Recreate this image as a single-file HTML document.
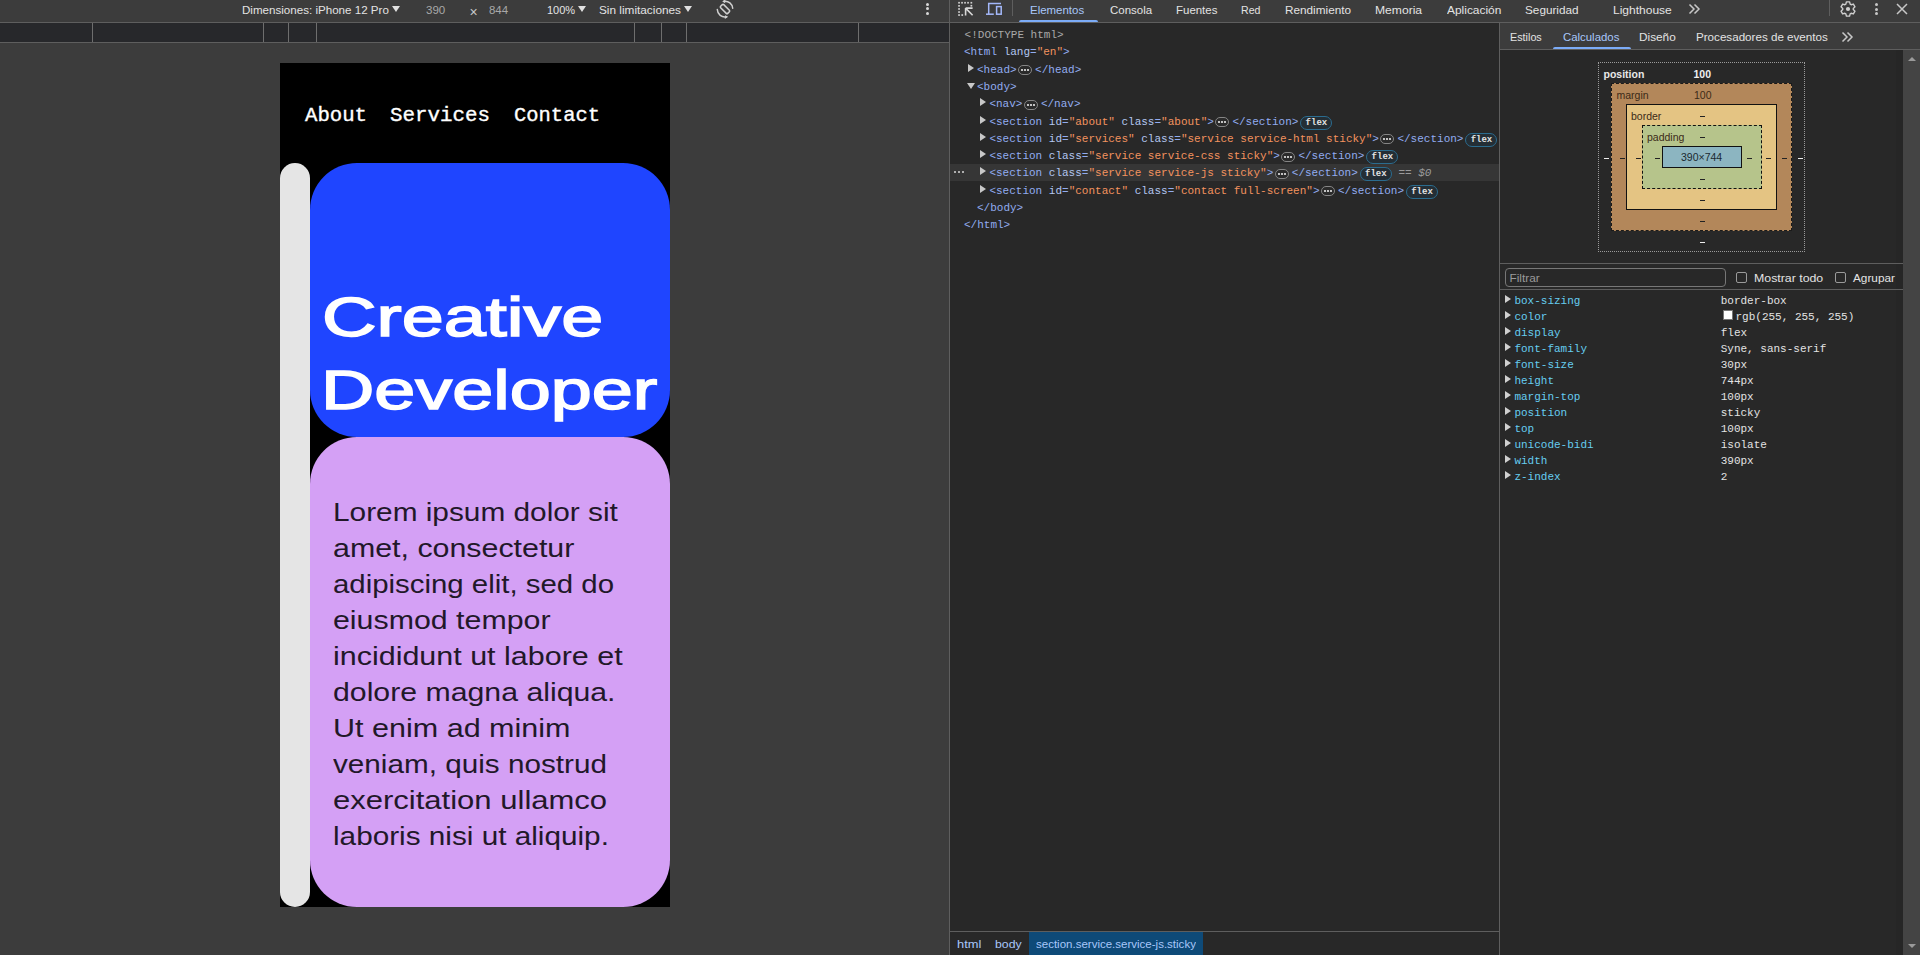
<!DOCTYPE html>
<html lang="en">
<head>
<meta charset="utf-8">
<style>
*{box-sizing:border-box;margin:0;padding:0}
html,body{width:1920px;height:955px;overflow:hidden;background:#3c3c3c;font-family:"Liberation Sans",sans-serif}
.a{position:absolute;white-space:nowrap}
#screen{position:absolute;left:280px;top:63px;width:390px;height:844px;background:#000;overflow:hidden}

.ui{font-family:"Liberation Sans",sans-serif;font-size:11.8px;line-height:16px;color:#e3e3e3}
.mono{font-family:"Liberation Mono",monospace;font-size:11px;line-height:16px;color:#e3e3e3}
.tg{color:#92acf0}.an{color:#b3c6f0}.av{color:#f3935f}.dt{color:#a8a8a8}
.ell{display:inline-block;vertical-align:-2.5px;margin:0 3px 0 1.5px}
.flex{display:inline-block;vertical-align:0;margin-left:2px;width:32px;height:14px;line-height:12px;text-align:center;font-family:'Liberation Mono',monospace;font-weight:bold;font-size:9px;color:#e2e2e2;border:1px solid #2b6c8f;border-radius:7px;background:#242e35}
.dl{color:#9a9a9a}

.nav{top:41px;-webkit-text-stroke:0.35px #fff;font-family:"Liberation Mono",monospace;font-size:20px;color:#fff;line-height:24px;transform-origin:0 0}
.hero{font-weight:normal;-webkit-text-stroke:1.5px #fff;font-size:55px;line-height:73px;color:#fff;transform-origin:0 0}
.lorem{font-size:26px;line-height:36px;color:#221829;transform-origin:0 0}

</style>
</head>
<body>
<div style="position:absolute;left:0px;top:0px;width:949px;height:22px;background:#3c3c3c"></div>
<div class="a ui" style="left:241.80px;top:1.5px;transform-origin:0 0;transform:scaleX(0.9821);">Dimensiones: iPhone 12 Pro</div>
<div style="position:absolute;left:392px;top:5.5px;width:0;height:0;border-left:4.0px solid transparent;border-right:4.0px solid transparent;border-top:6px solid #e0e0e0"></div>
<div class="a ui" style="left:426.01px;top:1.5px;transform-origin:0 0;transform:scaleX(0.9791);color:#a8a8a8">390</div>
<div class="a ui" style="left:469.5px;top:3.5px;color:#c8c8c8;font-size:14px">×</div>
<div class="a ui" style="left:488.80px;top:1.5px;transform-origin:0 0;transform:scaleX(0.9714);color:#a8a8a8">844</div>
<div class="a ui" style="left:547.00px;top:1.5px;transform-origin:0 0;transform:scaleX(0.9334);">100%</div>
<div style="position:absolute;left:578px;top:5.5px;width:0;height:0;border-left:4.0px solid transparent;border-right:4.0px solid transparent;border-top:6px solid #e0e0e0"></div>
<div class="a ui" style="left:599.00px;top:1.5px;transform-origin:0 0;transform:scaleX(1.0000);">Sin limitaciones</div>
<div style="position:absolute;left:684px;top:5.5px;width:0;height:0;border-left:4.0px solid transparent;border-right:4.0px solid transparent;border-top:6px solid #e0e0e0"></div>
<svg style="position:absolute;left:714px;top:0px" width="22" height="20" viewBox="0 0 22 20"><g fill="none" stroke="#d0d0d0" stroke-width="1.5" stroke-linecap="round"><rect x="8.8" y="4" width="4.4" height="10" rx="1" transform="rotate(-45 11 9)"/><path d="M10 1.3 A7.6 7.6 0 0 1 18.7 8.3"/><path d="M3.3 9.6 A7.6 7.6 0 0 0 12.4 16.8"/></g><path d="M8.2 1.4 L11.4 -0.6 L11.2 3.2Z M14.2 16.8 L10.8 19 L11 15.2Z" fill="#d0d0d0"/></svg>
<div style="position:absolute;left:926.4px;top:2.9px;width:3px;height:3px;background:#d8d8d8;border-radius:50%"></div>
<div style="position:absolute;left:926.4px;top:7.4px;width:3px;height:3px;background:#d8d8d8;border-radius:50%"></div>
<div style="position:absolute;left:926.4px;top:11.9px;width:3px;height:3px;background:#d8d8d8;border-radius:50%"></div>
<div style="position:absolute;left:0px;top:22px;width:949px;height:1px;background:#5e5e5e"></div>
<div style="position:absolute;left:0px;top:23px;width:949px;height:19px;background:#27282b"></div>
<div style="position:absolute;left:0px;top:42px;width:949px;height:1px;background:#5e5e5e"></div>
<div style="position:absolute;left:92px;top:23px;width:1px;height:19px;background:#6e6e6e"></div>
<div style="position:absolute;left:263px;top:23px;width:1px;height:19px;background:#6e6e6e"></div>
<div style="position:absolute;left:288px;top:23px;width:1px;height:19px;background:#6e6e6e"></div>
<div style="position:absolute;left:316px;top:23px;width:1px;height:19px;background:#6e6e6e"></div>
<div style="position:absolute;left:634px;top:23px;width:1px;height:19px;background:#6e6e6e"></div>
<div style="position:absolute;left:661px;top:23px;width:1px;height:19px;background:#6e6e6e"></div>
<div style="position:absolute;left:686px;top:23px;width:1px;height:19px;background:#6e6e6e"></div>
<div style="position:absolute;left:858px;top:23px;width:1px;height:19px;background:#6e6e6e"></div>
<div style="position:absolute;left:0px;top:43px;width:949px;height:912px;background:#3c3c3c"></div>
<div id="screen">
<div class="a nav" style="left:24.73648539614402px;transform:scaleX(1.033059578508698)">About</div>
<div class="a nav" style="left:110.09550080099473px;transform:scaleX(1.04166994259613)">Services</div>
<div class="a nav" style="left:233.72443368727227px;transform:scaleX(1.0235770638431585)">Contact</div>
<div style="position:absolute;left:0;top:100px;width:30px;height:744px;background:#e5e5e5;border-radius:15px"></div>
<div style="position:absolute;left:30px;top:100px;width:360px;height:274px;background:#1f45ff;border-radius:47px;overflow:hidden">
<div class="a hero" style="left:11.781781223807855px;top:118px;transform:scaleX(1.3740245309178205)">Creative</div>
<div class="a hero" style="left:10.632424752281565px;top:191px;transform:scaleX(1.3418938119295865)">Developer</div>
</div>
<div style="position:absolute;left:30px;top:374px;width:360px;height:470px;background:#d4a0f5;border-radius:47px">
<div class="a lorem" style="left:23px;top:57px;transform:scaleX(1.1460153284807353)">Lorem ipsum dolor sit</div>
<div class="a lorem" style="left:23px;top:93px;transform:scaleX(1.1680010662269504)">amet, consectetur</div>
<div class="a lorem" style="left:23px;top:129px;transform:scaleX(1.130400381303449)">adipiscing elit, sed do</div>
<div class="a lorem" style="left:23px;top:165px;transform:scaleX(1.1666666666666667)">eiusmod tempor</div>
<div class="a lorem" style="left:23px;top:201px;transform:scaleX(1.1717160493404404)">incididunt ut labore et</div>
<div class="a lorem" style="left:23px;top:237px;transform:scaleX(1.1633703924247996)">dolore magna aliqua.</div>
<div class="a lorem" style="left:23px;top:273px;transform:scaleX(1.1740359149623456)">Ut enim ad minim</div>
<div class="a lorem" style="left:23px;top:309px;transform:scaleX(1.1420428648979697)">veniam, quis nostrud</div>
<div class="a lorem" style="left:23px;top:345px;transform:scaleX(1.1929824561403508)">exercitation ullamco</div>
<div class="a lorem" style="left:23px;top:381px;transform:scaleX(1.1431322776539297)">laboris nisi ut aliquip.</div>
</div></div>
<div style="position:absolute;left:949px;top:0px;width:1px;height:955px;background:#5e5e5e"></div>
<div style="position:absolute;left:950px;top:0px;width:970px;height:22px;background:#3c3c3c"></div>
<div style="position:absolute;left:950px;top:22px;width:970px;height:1px;background:#5e5e5e"></div>
<svg style="position:absolute;left:957px;top:0px" width="20" height="20" viewBox="0 0 20 20"><rect x="1.2" y="1.9000000000000001" width="1.7" height="1.7" fill="#d0d0d0"/><rect x="4.2" y="1.9000000000000001" width="1.7" height="1.7" fill="#d0d0d0"/><rect x="7.2" y="1.9000000000000001" width="1.7" height="1.7" fill="#d0d0d0"/><rect x="10.2" y="1.9000000000000001" width="1.7" height="1.7" fill="#d0d0d0"/><rect x="13.5" y="1.9000000000000001" width="1.7" height="1.7" fill="#d0d0d0"/><rect x="13.5" y="4.9" width="1.7" height="1.7" fill="#d0d0d0"/><rect x="1.2" y="5.0" width="1.7" height="1.7" fill="#d0d0d0"/><rect x="1.2" y="8.1" width="1.7" height="1.7" fill="#d0d0d0"/><rect x="1.2" y="11.2" width="1.7" height="1.7" fill="#d0d0d0"/><rect x="1.2" y="14.2" width="1.7" height="1.7" fill="#d0d0d0"/><rect x="4.4" y="14.2" width="1.7" height="1.7" fill="#d0d0d0"/><path d="M8.6 8.1H15.6M8.6 8.1V15.4M8.6 8.1L15.6 15.2" fill="none" stroke="#d8d8d8" stroke-width="1.6"/></svg>
<svg style="position:absolute;left:984px;top:0px" width="20" height="20" viewBox="0 0 20 20"><g fill="none" stroke="#a4b8fa" stroke-width="1.5"><path d="M4.7 14.2V3.5H17"/><path d="M2 14.2H9.8"/><rect x="12.6" y="6.6" width="4.6" height="7.6"/></g></svg>
<div style="position:absolute;left:1012px;top:0px;width:1px;height:16px;background:#5e5e5e"></div>
<div class="a ui" style="left:1030.41px;top:1.5px;transform-origin:0 0;transform:scaleX(0.9711);color:#a8c7fa">Elementos</div>
<div class="a ui" style="left:1109.80px;top:1.5px;transform-origin:0 0;transform:scaleX(0.9723);color:#e3e3e3">Consola</div>
<div class="a ui" style="left:1175.80px;top:1.5px;transform-origin:0 0;transform:scaleX(0.9716);color:#e3e3e3">Fuentes</div>
<div class="a ui" style="left:1240.82px;top:1.5px;transform-origin:0 0;transform:scaleX(0.8961);color:#e3e3e3">Red</div>
<div class="a ui" style="left:1284.79px;top:1.5px;transform-origin:0 0;transform:scaleX(0.9971);color:#e3e3e3">Rendimiento</div>
<div class="a ui" style="left:1375.17px;top:1.5px;transform-origin:0 0;transform:scaleX(1.0262);color:#e3e3e3">Memoria</div>
<div class="a ui" style="left:1447.09px;top:1.5px;transform-origin:0 0;transform:scaleX(1.0111);color:#e3e3e3">Aplicación</div>
<div class="a ui" style="left:1524.79px;top:1.5px;transform-origin:0 0;transform:scaleX(0.9964);color:#e3e3e3">Seguridad</div>
<div class="a ui" style="left:1613.49px;top:1.5px;transform-origin:0 0;transform:scaleX(1.0176);color:#e3e3e3">Lighthouse</div>
<div style="position:absolute;left:1019px;top:20px;width:79px;height:2px;background:#7cacf8;border-radius:2px 2px 0 0"></div>
<svg style="position:absolute;left:1687.5px;top:3px" width="13" height="12" viewBox="0 0 13 12"><path d="M1.5 1.5L6 6L1.5 10.5M6.5 1.5L11 6L6.5 10.5" fill="none" stroke="#c7c7c7" stroke-width="1.5"/></svg>
<div style="position:absolute;left:1829px;top:0px;width:1px;height:16px;background:#5e5e5e"></div>
<svg style="position:absolute;left:1840px;top:1px" width="16" height="16" viewBox="0 0 16 16"><path d="M6.41 0.88 L9.59 0.88 L10.16 3.16 L11.11 3.71 L13.37 3.06 L14.97 5.82 L13.27 7.45 L13.27 8.55 L14.97 10.18 L13.37 12.94 L11.11 12.29 L10.16 12.84 L9.59 15.12 L6.41 15.12 L5.84 12.84 L4.89 12.29 L2.63 12.94 L1.03 10.18 L2.73 8.55 L2.73 7.45 L1.03 5.82 L2.63 3.06 L4.89 3.71 L5.84 3.16Z" fill="none" stroke="#cfcfcf" stroke-width="1.4" stroke-linejoin="round"/><circle cx="8" cy="8" r="2.1" fill="#cfcfcf"/></svg>
<div style="position:absolute;left:1874.5px;top:3.0px;width:3px;height:3px;background:#c7c7c7;border-radius:50%"></div>
<div style="position:absolute;left:1874.5px;top:7.5px;width:3px;height:3px;background:#c7c7c7;border-radius:50%"></div>
<div style="position:absolute;left:1874.5px;top:12.0px;width:3px;height:3px;background:#c7c7c7;border-radius:50%"></div>
<svg style="position:absolute;left:1895px;top:2px" width="14" height="14" viewBox="0 0 14 14"><path d="M2 2L12 12M12 2L2 12" stroke="#c7c7c7" stroke-width="1.5"/></svg>
<div style="position:absolute;left:950px;top:23px;width:549px;height:908px;background:#282828"></div>
<div style="position:absolute;left:950px;top:164px;width:549px;height:17px;background:#363636"></div>
<div style="position:absolute;left:953.5px;top:171px;width:2.4px;height:2.4px;background:#d8d8d8;border-radius:50%"></div>
<div style="position:absolute;left:957.5px;top:171px;width:2.4px;height:2.4px;background:#d8d8d8;border-radius:50%"></div>
<div style="position:absolute;left:961.5px;top:171px;width:2.4px;height:2.4px;background:#d8d8d8;border-radius:50%"></div>
<div class="a mono" style="left:964.6px;top:27.200000000000003px;"><span class="dt">&lt;!DOCTYPE html&gt;</span></div>
<div class="a mono" style="left:964px;top:44.47px;"><span class="tg">&lt;html</span> <span class="an">lang</span><span class="tg">=</span><span class="av">"en"</span><span class="tg">&gt;</span></div>
<div style="position:absolute;left:968px;top:63.74000000000001px;width:0;height:0;border-top:4px solid transparent;border-bottom:4px solid transparent;border-left:6px solid #c8c8c8"></div>
<div class="a mono" style="left:977px;top:61.74000000000001px;"><span class="tg">&lt;head&gt;</span><svg class="ell" width="14" height="10" viewBox="0 0 14 10"><rect x="0.5" y="0.5" width="13" height="9" rx="4.5" fill="#2a2a2a" stroke="#858585"/><circle cx="4" cy="5" r="1.1" fill="#e8e8e8"/><circle cx="7" cy="5" r="1.1" fill="#e8e8e8"/><circle cx="10" cy="5" r="1.1" fill="#e8e8e8"/></svg><span class="tg">&lt;/head&gt;</span></div>
<div style="position:absolute;left:967px;top:83.01px;width:0;height:0;border-left:4px solid transparent;border-right:4px solid transparent;border-top:6px solid #c8c8c8"></div>
<div class="a mono" style="left:977px;top:79.01px;"><span class="tg">&lt;body&gt;</span></div>
<div style="position:absolute;left:980.4px;top:98.28px;width:0;height:0;border-top:4px solid transparent;border-bottom:4px solid transparent;border-left:6px solid #c8c8c8"></div>
<div class="a mono" style="left:989.4px;top:96.28px;"><span class="tg">&lt;nav&gt;</span><svg class="ell" width="14" height="10" viewBox="0 0 14 10"><rect x="0.5" y="0.5" width="13" height="9" rx="4.5" fill="#2a2a2a" stroke="#858585"/><circle cx="4" cy="5" r="1.1" fill="#e8e8e8"/><circle cx="7" cy="5" r="1.1" fill="#e8e8e8"/><circle cx="10" cy="5" r="1.1" fill="#e8e8e8"/></svg><span class="tg">&lt;/nav&gt;</span></div>
<div style="position:absolute;left:980.4px;top:115.55px;width:0;height:0;border-top:4px solid transparent;border-bottom:4px solid transparent;border-left:6px solid #c8c8c8"></div>
<div class="a mono" style="left:989.4px;top:113.55px;"><span class="tg">&lt;section</span> <span class="an">id</span><span class="tg">=</span><span class="av">"about"</span> <span class="an">class</span><span class="tg">=</span><span class="av">"about"</span><span class="tg">&gt;</span><svg class="ell" width="14" height="10" viewBox="0 0 14 10"><rect x="0.5" y="0.5" width="13" height="9" rx="4.5" fill="#2a2a2a" stroke="#858585"/><circle cx="4" cy="5" r="1.1" fill="#e8e8e8"/><circle cx="7" cy="5" r="1.1" fill="#e8e8e8"/><circle cx="10" cy="5" r="1.1" fill="#e8e8e8"/></svg><span class="tg">&lt;/section&gt;</span><span class="flex">flex</span></div>
<div style="position:absolute;left:980.4px;top:132.82px;width:0;height:0;border-top:4px solid transparent;border-bottom:4px solid transparent;border-left:6px solid #c8c8c8"></div>
<div class="a mono" style="left:989.4px;top:130.82px;"><span class="tg">&lt;section</span> <span class="an">id</span><span class="tg">=</span><span class="av">"services"</span> <span class="an">class</span><span class="tg">=</span><span class="av">"service service-html sticky"</span><span class="tg">&gt;</span><svg class="ell" width="14" height="10" viewBox="0 0 14 10"><rect x="0.5" y="0.5" width="13" height="9" rx="4.5" fill="#2a2a2a" stroke="#858585"/><circle cx="4" cy="5" r="1.1" fill="#e8e8e8"/><circle cx="7" cy="5" r="1.1" fill="#e8e8e8"/><circle cx="10" cy="5" r="1.1" fill="#e8e8e8"/></svg><span class="tg">&lt;/section&gt;</span><span class="flex">flex</span></div>
<div style="position:absolute;left:980.4px;top:150.09px;width:0;height:0;border-top:4px solid transparent;border-bottom:4px solid transparent;border-left:6px solid #c8c8c8"></div>
<div class="a mono" style="left:989.4px;top:148.09px;"><span class="tg">&lt;section</span> <span class="an">class</span><span class="tg">=</span><span class="av">"service service-css sticky"</span><span class="tg">&gt;</span><svg class="ell" width="14" height="10" viewBox="0 0 14 10"><rect x="0.5" y="0.5" width="13" height="9" rx="4.5" fill="#2a2a2a" stroke="#858585"/><circle cx="4" cy="5" r="1.1" fill="#e8e8e8"/><circle cx="7" cy="5" r="1.1" fill="#e8e8e8"/><circle cx="10" cy="5" r="1.1" fill="#e8e8e8"/></svg><span class="tg">&lt;/section&gt;</span><span class="flex">flex</span></div>
<div style="position:absolute;left:980.4px;top:167.36px;width:0;height:0;border-top:4px solid transparent;border-bottom:4px solid transparent;border-left:6px solid #c8c8c8"></div>
<div class="a mono" style="left:989.4px;top:165.36px;"><span class="tg">&lt;section</span> <span class="an">class</span><span class="tg">=</span><span class="av">"service service-js sticky"</span><span class="tg">&gt;</span><svg class="ell" width="14" height="10" viewBox="0 0 14 10"><rect x="0.5" y="0.5" width="13" height="9" rx="4.5" fill="#2a2a2a" stroke="#858585"/><circle cx="4" cy="5" r="1.1" fill="#e8e8e8"/><circle cx="7" cy="5" r="1.1" fill="#e8e8e8"/><circle cx="10" cy="5" r="1.1" fill="#e8e8e8"/></svg><span class="tg">&lt;/section&gt;</span><span class="flex">flex</span><span class="dl"> == <i>$0</i></span></div>
<div style="position:absolute;left:980.4px;top:184.63px;width:0;height:0;border-top:4px solid transparent;border-bottom:4px solid transparent;border-left:6px solid #c8c8c8"></div>
<div class="a mono" style="left:989.4px;top:182.63px;"><span class="tg">&lt;section</span> <span class="an">id</span><span class="tg">=</span><span class="av">"contact"</span> <span class="an">class</span><span class="tg">=</span><span class="av">"contact full-screen"</span><span class="tg">&gt;</span><svg class="ell" width="14" height="10" viewBox="0 0 14 10"><rect x="0.5" y="0.5" width="13" height="9" rx="4.5" fill="#2a2a2a" stroke="#858585"/><circle cx="4" cy="5" r="1.1" fill="#e8e8e8"/><circle cx="7" cy="5" r="1.1" fill="#e8e8e8"/><circle cx="10" cy="5" r="1.1" fill="#e8e8e8"/></svg><span class="tg">&lt;/section&gt;</span><span class="flex">flex</span></div>
<div class="a mono" style="left:977px;top:199.89999999999998px;"><span class="tg">&lt;/body&gt;</span></div>
<div class="a mono" style="left:964px;top:217.17000000000002px;"><span class="tg">&lt;/html&gt;</span></div>
<div style="position:absolute;left:950px;top:931px;width:549px;height:1px;background:#5e5e5e"></div>
<div style="position:absolute;left:950px;top:932px;width:549px;height:23px;background:#282828"></div>
<div class="a ui" style="left:957.00px;top:936px;transform-origin:0 0;transform:scaleX(1.0909);color:#a8c7fa">html</div>
<div class="a ui" style="left:995.00px;top:936px;transform-origin:0 0;transform:scaleX(1.0385);color:#a8c7fa">body</div>
<div style="position:absolute;left:1029px;top:932px;width:174px;height:23px;background:#0e4a78"></div>
<div class="a ui" style="left:1036.00px;top:936px;transform-origin:0 0;transform:scaleX(0.9756);color:#a8c7fa">section.service.service-js.sticky</div>
<div style="position:absolute;left:1499px;top:23px;width:1px;height:932px;background:#5e5e5e"></div>
<div style="position:absolute;left:1500px;top:23px;width:420px;height:26px;background:#3c3c3c"></div>
<div style="position:absolute;left:1500px;top:49px;width:420px;height:1px;background:#5e5e5e"></div>
<div class="a ui" style="left:1510.00px;top:28.5px;transform-origin:0 0;transform:scaleX(0.9143);color:#e3e3e3">Estilos</div>
<div class="a ui" style="left:1562.51px;top:28.5px;transform-origin:0 0;transform:scaleX(0.9656);color:#a8c7fa">Calculados</div>
<div class="a ui" style="left:1639.00px;top:28.5px;transform-origin:0 0;transform:scaleX(1.0000);color:#e3e3e3">Diseño</div>
<div class="a ui" style="left:1695.51px;top:28.5px;transform-origin:0 0;transform:scaleX(0.9850);color:#e3e3e3">Procesadores de eventos</div>
<div style="position:absolute;left:1552.5px;top:47px;width:78px;height:2px;background:#7cacf8;border-radius:2px 2px 0 0"></div>
<svg style="position:absolute;left:1841px;top:31px" width="13" height="12" viewBox="0 0 13 12"><path d="M1.5 1.5L6 6L1.5 10.5M6.5 1.5L11 6L6.5 10.5" fill="none" stroke="#c7c7c7" stroke-width="1.5"/></svg>
<div style="position:absolute;left:1500px;top:50px;width:403px;height:905px;background:#282828"></div>
<div style="position:absolute;left:1896px;top:50px;width:7px;height:905px;background:#262626"></div>
<div style="position:absolute;left:1903px;top:50px;width:17px;height:905px;background:#444444"></div>
<div style="position:absolute;left:1907.5px;top:57px;width:0;height:0;border-left:4.0px solid transparent;border-right:4.0px solid transparent;border-bottom:4px solid #9a9a9a"></div>
<div style="position:absolute;left:1907.5px;top:944px;width:0;height:0;border-left:4.0px solid transparent;border-right:4.0px solid transparent;border-top:4px solid #9a9a9a"></div>
<div style="position:absolute;left:1598px;top:62px;width:207px;height:190px;border:1px dotted #9a9a9a"></div>
<div style="position:absolute;left:1611px;top:83px;width:181px;height:148px;background:#b3875a;border:1px dashed #1a1a1a"></div>
<div style="position:absolute;left:1626px;top:104px;width:151px;height:106px;background:#e4c483;border:1px solid #111"></div>
<div style="position:absolute;left:1642px;top:125px;width:120px;height:64px;background:#b6c48b;border:1px dashed #111"></div>
<div style="position:absolute;left:1662px;top:146px;width:80px;height:22px;background:#8cb5c1;border:1px solid #111"></div>
<div class="a ui" style="left:1603.5px;top:65.5px;color:#e8e8e8;font-weight:bold;font-size:10.5px">position</div>
<div class="a ui" style="left:1693.5px;top:65.5px;color:#f0f0f0;font-weight:bold;font-size:10.5px">100</div>
<div class="a ui" style="left:1616.5px;top:86.5px;color:#3b2a17;font-size:10.5px">margin</div>
<div class="a ui" style="left:1694px;top:86.5px;color:#3b2a17;font-size:10.5px">100</div>
<div class="a ui" style="left:1631px;top:107.5px;color:#3b2a17;font-size:10.5px">border</div>
<div class="a ui" style="left:1647px;top:128.5px;color:#3b2a17;font-size:10.5px">padding</div>
<div class="a ui" style="left:1681px;top:149px;color:#1a2a30;font-size:10.5px">390×744</div>
<div style="position:absolute;left:1700px;top:116px;width:5px;height:1.3px;background:#222"></div>
<div style="position:absolute;left:1700px;top:137px;width:5px;height:1.3px;background:#222"></div>
<div style="position:absolute;left:1700px;top:179px;width:5px;height:1.3px;background:#222"></div>
<div style="position:absolute;left:1700px;top:200px;width:5px;height:1.3px;background:#222"></div>
<div style="position:absolute;left:1700px;top:221px;width:5px;height:1.3px;background:#222"></div>
<div style="position:absolute;left:1700px;top:241.5px;width:5px;height:1.3px;background:#eee"></div>
<div style="position:absolute;left:1604px;top:158px;width:5px;height:1.3px;background:#eee"></div>
<div style="position:absolute;left:1620px;top:158px;width:5px;height:1.3px;background:#222"></div>
<div style="position:absolute;left:1636px;top:158px;width:5px;height:1.3px;background:#222"></div>
<div style="position:absolute;left:1655px;top:158px;width:5px;height:1.3px;background:#222"></div>
<div style="position:absolute;left:1747px;top:158px;width:5px;height:1.3px;background:#222"></div>
<div style="position:absolute;left:1766px;top:158px;width:5px;height:1.3px;background:#222"></div>
<div style="position:absolute;left:1782px;top:158px;width:5px;height:1.3px;background:#222"></div>
<div style="position:absolute;left:1798px;top:158px;width:5px;height:1.3px;background:#eee"></div>
<div style="position:absolute;left:1500px;top:263px;width:403px;height:1px;background:#5e5e5e"></div>
<div style="position:absolute;left:1505px;top:268px;width:221px;height:19px;border:1px solid #777;border-radius:4px;background:#282828"></div>
<div class="a ui" style="left:1509.5px;top:270px;color:#9a9a9a">Filtrar</div>
<div style="position:absolute;left:1736px;top:272px;width:11px;height:11px;border:1px solid #9a9a9a;border-radius:2px"></div>
<div class="a ui" style="left:1754.00px;top:270px;transform-origin:0 0;transform:scaleX(1.0455);">Mostrar todo</div>
<div style="position:absolute;left:1835px;top:272px;width:11px;height:11px;border:1px solid #9a9a9a;border-radius:2px"></div>
<div class="a ui" style="left:1853.00px;top:270px;transform-origin:0 0;transform:scaleX(1.0000);">Agrupar</div>
<div style="position:absolute;left:1500px;top:289px;width:403px;height:1px;background:#5e5e5e"></div>
<div style="position:absolute;left:1505px;top:295.25px;width:0;height:0;border-top:4px solid transparent;border-bottom:4px solid transparent;border-left:6px solid #d0d0d0"></div>
<div class="a mono" style="left:1514.4px;top:292.75px;color:#66cdf0">box-sizing</div>
<div class="a mono" style="left:1720.7px;top:292.75px;color:#e3e3e3">border-box</div>
<div style="position:absolute;left:1505px;top:311.25px;width:0;height:0;border-top:4px solid transparent;border-bottom:4px solid transparent;border-left:6px solid #d0d0d0"></div>
<div class="a mono" style="left:1514.4px;top:308.75px;color:#66cdf0">color</div>
<div style="position:absolute;left:1722.5px;top:310.25px;width:10px;height:10px;background:#fff;border:1px solid #777"></div>
<div class="a mono" style="left:1735.5px;top:308.75px;color:#e3e3e3">rgb(255, 255, 255)</div>
<div style="position:absolute;left:1505px;top:327.25px;width:0;height:0;border-top:4px solid transparent;border-bottom:4px solid transparent;border-left:6px solid #d0d0d0"></div>
<div class="a mono" style="left:1514.4px;top:324.75px;color:#66cdf0">display</div>
<div class="a mono" style="left:1720.7px;top:324.75px;color:#e3e3e3">flex</div>
<div style="position:absolute;left:1505px;top:343.25px;width:0;height:0;border-top:4px solid transparent;border-bottom:4px solid transparent;border-left:6px solid #d0d0d0"></div>
<div class="a mono" style="left:1514.4px;top:340.75px;color:#66cdf0">font-family</div>
<div class="a mono" style="left:1720.7px;top:340.75px;color:#e3e3e3">Syne, sans-serif</div>
<div style="position:absolute;left:1505px;top:359.25px;width:0;height:0;border-top:4px solid transparent;border-bottom:4px solid transparent;border-left:6px solid #d0d0d0"></div>
<div class="a mono" style="left:1514.4px;top:356.75px;color:#66cdf0">font-size</div>
<div class="a mono" style="left:1720.7px;top:356.75px;color:#e3e3e3">30px</div>
<div style="position:absolute;left:1505px;top:375.25px;width:0;height:0;border-top:4px solid transparent;border-bottom:4px solid transparent;border-left:6px solid #d0d0d0"></div>
<div class="a mono" style="left:1514.4px;top:372.75px;color:#66cdf0">height</div>
<div class="a mono" style="left:1720.7px;top:372.75px;color:#e3e3e3">744px</div>
<div style="position:absolute;left:1505px;top:391.25px;width:0;height:0;border-top:4px solid transparent;border-bottom:4px solid transparent;border-left:6px solid #d0d0d0"></div>
<div class="a mono" style="left:1514.4px;top:388.75px;color:#66cdf0">margin-top</div>
<div class="a mono" style="left:1720.7px;top:388.75px;color:#e3e3e3">100px</div>
<div style="position:absolute;left:1505px;top:407.25px;width:0;height:0;border-top:4px solid transparent;border-bottom:4px solid transparent;border-left:6px solid #d0d0d0"></div>
<div class="a mono" style="left:1514.4px;top:404.75px;color:#66cdf0">position</div>
<div class="a mono" style="left:1720.7px;top:404.75px;color:#e3e3e3">sticky</div>
<div style="position:absolute;left:1505px;top:423.25px;width:0;height:0;border-top:4px solid transparent;border-bottom:4px solid transparent;border-left:6px solid #d0d0d0"></div>
<div class="a mono" style="left:1514.4px;top:420.75px;color:#66cdf0">top</div>
<div class="a mono" style="left:1720.7px;top:420.75px;color:#e3e3e3">100px</div>
<div style="position:absolute;left:1505px;top:439.25px;width:0;height:0;border-top:4px solid transparent;border-bottom:4px solid transparent;border-left:6px solid #d0d0d0"></div>
<div class="a mono" style="left:1514.4px;top:436.75px;color:#66cdf0">unicode-bidi</div>
<div class="a mono" style="left:1720.7px;top:436.75px;color:#e3e3e3">isolate</div>
<div style="position:absolute;left:1505px;top:455.25px;width:0;height:0;border-top:4px solid transparent;border-bottom:4px solid transparent;border-left:6px solid #d0d0d0"></div>
<div class="a mono" style="left:1514.4px;top:452.75px;color:#66cdf0">width</div>
<div class="a mono" style="left:1720.7px;top:452.75px;color:#e3e3e3">390px</div>
<div style="position:absolute;left:1505px;top:471.25px;width:0;height:0;border-top:4px solid transparent;border-bottom:4px solid transparent;border-left:6px solid #d0d0d0"></div>
<div class="a mono" style="left:1514.4px;top:468.75px;color:#66cdf0">z-index</div>
<div class="a mono" style="left:1720.7px;top:468.75px;color:#e3e3e3">2</div>
</body>
</html>
